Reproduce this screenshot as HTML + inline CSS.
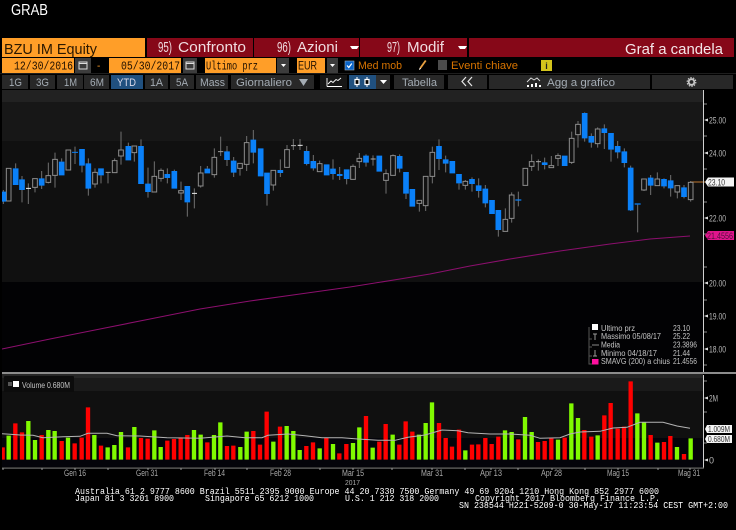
<!DOCTYPE html>
<html><head><meta charset="utf-8"><title>GRAB</title>
<style>
html,body{margin:0;padding:0;background:#000;width:736px;height:530px;overflow:hidden}
svg{display:block}
text{font-family:"Liberation Sans",sans-serif;white-space:pre}
.m{font-family:"Liberation Mono",monospace}
.b{fill:#a4acb4;font-size:11px}
.o{fill:#d87400;font-size:11px}
.a{fill:#b8b8b8;font-size:9px}
.l{fill:#c4c4c4;font-size:8px}
.f{fill:#fff;font-size:9.5px;font-family:"Liberation Mono",monospace}
.w{fill:#f0dce0;font-size:15px}
.x{fill:#a8a8a8;font-size:9px}
</style></head><body>
<svg width="736" height="530" viewBox="0 0 736 530" xmlns="http://www.w3.org/2000/svg">
<rect width="736" height="530" fill="#000"/>
<text x="11" y="15" fill="#fff" font-size="15.5" textLength="37" lengthAdjust="spacingAndGlyphs">GRAB</text>

<!-- row 1 -->
<rect x="2" y="38" width="143" height="19" fill="#ff9e28"/>
<text x="4" y="54" fill="#2a1800" font-size="14.5" textLength="93" lengthAdjust="spacingAndGlyphs">BZU IM Equity</text>
<rect x="147" y="38" width="106" height="19" fill="#860818"/>
<rect x="254" y="38" width="105" height="19" fill="#860818"/>
<rect x="360" y="38" width="107" height="19" fill="#860818"/>
<rect x="469" y="38" width="265" height="19" fill="#860818"/>
<text class="w" x="158" y="52" textLength="14" lengthAdjust="spacingAndGlyphs">95)</text>
<text class="w" x="178" y="52" textLength="68" lengthAdjust="spacingAndGlyphs">Confronto</text>
<text class="w" x="277" y="52" textLength="14" lengthAdjust="spacingAndGlyphs">96)</text>
<text class="w" x="297" y="52" textLength="41" lengthAdjust="spacingAndGlyphs">Azioni</text>
<text class="w" x="387" y="52" textLength="13" lengthAdjust="spacingAndGlyphs">97)</text>
<text class="w" x="407" y="52" textLength="37" lengthAdjust="spacingAndGlyphs">Modif</text>
<text x="625" y="54" fill="#f4e6e8" font-size="14.5" textLength="98" lengthAdjust="spacingAndGlyphs">Graf a candela</text>
<path d="M350 46h9l-2 3h-5zM458 46h9l-2 3h-5z" fill="#fff"/>

<!-- row 2 -->
<rect x="2" y="58" width="72" height="15" fill="#ff9e28"/>
<text class="m" x="14" y="69.500" fill="#201000" font-size="11.500" textLength="59" lengthAdjust="spacingAndGlyphs">12/30/2016</text>
<rect x="75" y="58" width="16" height="15" fill="#3c3c3c"/>
<path d="M79 62h8v7h-8zM79 63.500h8" fill="none" stroke="#ddd"/>
<text x="97" y="69" fill="#ff9e28" font-size="10">-</text>
<rect x="109" y="58" width="72" height="15" fill="#ff9e28"/>
<text class="m" x="121" y="69.500" fill="#201000" font-size="11.500" textLength="59" lengthAdjust="spacingAndGlyphs">05/30/2017</text>
<rect x="183" y="58" width="14" height="15" fill="#3c3c3c"/>
<path d="M186 62h8v7h-8zM186 63.500h8" fill="none" stroke="#ddd"/>
<rect x="205" y="58" width="71" height="15" fill="#ff9e28"/>
<text class="m" x="206" y="69.500" fill="#201000" font-size="11.500" textLength="52" lengthAdjust="spacingAndGlyphs">Ultimo prz</text>
<rect x="277" y="58" width="12" height="15" fill="#3c3c3c"/>
<path d="M281 64h5l-2.500 3z" fill="#fff"/>
<rect x="297" y="58" width="28" height="15" fill="#ff9e28"/>
<text x="298" y="69.500" fill="#201000" font-size="11.500" textLength="19" lengthAdjust="spacingAndGlyphs">EUR</text>
<rect x="327" y="58" width="11" height="15" fill="#3c3c3c"/>
<path d="M330 64h5l-2.500 3z" fill="#fff"/>
<rect x="345" y="61" width="9" height="9" fill="#0a64c8" stroke="#9ab" stroke-width=".6"/>
<path d="M347 65.500l1.800 2 3-4" fill="none" stroke="#fff" stroke-width="1.200"/>
<text class="o" x="358" y="69" textLength="44" lengthAdjust="spacingAndGlyphs">Med mob</text>
<path d="M419 70l1-3 5-7 1.500 1-5 7z" fill="#e8a040"/><path d="M419 70l.7-2.300 1.400 1z" fill="#fff"/>
<rect x="438" y="60" width="9" height="10" fill="#4c4c4c"/>
<text class="o" x="451" y="69" textLength="67" lengthAdjust="spacingAndGlyphs">Eventi chiave</text>
<rect x="541" y="60" width="11" height="11" fill="#d4c41c"/>
<text x="546.500" y="69" fill="#222" font-size="9" font-weight="bold" text-anchor="middle">i</text>
<rect x="0" y="73" width="736" height="1" fill="#1e1e1e"/>

<!-- row 3 -->
<g fill="#282828">
<rect x="2" y="75" width="26" height="14"/><rect x="30" y="75" width="25" height="14"/><rect x="57" y="75" width="26" height="14"/><rect x="84" y="75" width="25" height="14"/>
<rect x="145" y="75" width="23" height="14"/><rect x="170" y="75" width="24" height="14"/><rect x="196" y="75" width="32" height="14"/><rect x="231" y="75" width="83" height="14"/>
<rect x="320" y="75" width="27" height="14" fill="#161616"/><rect x="376" y="75" width="14" height="14" fill="#2e2e2e"/>
<rect x="394" y="75" width="50" height="14"/><rect x="448" y="75" width="39" height="14"/><rect x="489" y="75" width="161" height="14"/><rect x="652" y="75" width="81" height="14"/>
</g>
<rect x="111" y="75" width="32" height="14" fill="#20507f"/>
<rect x="349" y="75" width="27" height="14" fill="#20507f"/>
<text class="b" x="9" y="86" textLength="13" lengthAdjust="spacingAndGlyphs">1G</text>
<text class="b" x="36" y="86" textLength="13" lengthAdjust="spacingAndGlyphs">3G</text>
<text class="b" x="64" y="86" textLength="13" lengthAdjust="spacingAndGlyphs">1M</text>
<text class="b" x="90" y="86" textLength="14" lengthAdjust="spacingAndGlyphs">6M</text>
<text class="b" x="117" y="86" textLength="19" lengthAdjust="spacingAndGlyphs" style="fill:#dde">YTD</text>
<text class="b" x="150" y="86" textLength="13" lengthAdjust="spacingAndGlyphs">1A</text>
<text class="b" x="176" y="86" textLength="12" lengthAdjust="spacingAndGlyphs">5A</text>
<text class="b" x="200" y="86" textLength="25" lengthAdjust="spacingAndGlyphs">Mass</text>
<text class="b" x="236" y="86" textLength="56" lengthAdjust="spacingAndGlyphs">Giornaliero</text>
<path d="M299 79h9l-4.500 7z" fill="#a4acb4"/>
<path d="M327 86.500V78M327 86.500h15M328 84l3-3 2 1.500 3-3 2 1 3-2.500" fill="none" stroke="#fff" stroke-width=".9"/>
<path d="M357 77v10M367 77v10" stroke="#fff"/>
<path d="M355 79.500h4v5h-4zM365 79.500h4v5h-4z" fill="#000" stroke="#fff" stroke-width="1.200"/>
<path d="M380 80h7l-3.500 4z" fill="#fff"/>
<text class="b" x="402" y="86" textLength="35" lengthAdjust="spacingAndGlyphs">Tabella</text>
<path d="M466 77l-4 4.500 4 4.500M472 77l-4 4.500 4 4.500" fill="none" stroke="#e6e6e6" stroke-width="1.200"/>
<path d="M527 87v-2h2v2zM531 87v-3h2v3zM535 87v-4h2v4zM539 87v-2h2v2z" fill="#fff"/>
<path d="M527 82l4-4 3 2 3-2 3 3" fill="none" stroke="#ddd" stroke-width=".9"/>
<text class="b" x="547" y="86" textLength="68" lengthAdjust="spacingAndGlyphs">Agg a grafico</text>
<circle cx="691.500" cy="82" r="2.800" fill="none" stroke="#c8c8c8" stroke-width="1.800"/>
<circle cx="691.500" cy="82" r="4.300" fill="none" stroke="#c8c8c8" stroke-width="1.200" stroke-dasharray="1.500 1.200"/>

<!-- main chart background -->
<rect x="2" y="90" width="701" height="12" fill="#222"/>
<rect x="2" y="102" width="701" height="39" fill="#171717"/>
<rect x="2" y="141" width="701" height="141" fill="#101010"/>
<rect x="2" y="282" width="701" height="90" fill="#020204"/>

<!-- SMA -->
<path d="M2 349L50 339L100 329L150 319L200 309L250 301L300 294L350 287L400 279L430 274L470 266L510 259L560 251L610 244L650 239L690 236" fill="none" stroke="#8c0f6e" stroke-width="1.100"/>
<path d="M690 182h15" stroke="#c07830" stroke-width="1"/>

<!-- candles -->
<g transform="scale(.33333) translate(0,285)">
<path fill="none" stroke="#707070" stroke-width="3" d="M10 285V327M47 205V220M66 243V322M85 265V327M105 251V292M125 228V282M145 203V265M165 173V278M185 190V200M225 155V207M246 212V232M265 190V302M285 220V278M303 241V265M324 232V265M344 190V197M363 110V209M385 143V153M403 173V200M423 133V153M444 218V308M463 199V244M483 220V260M502 220V265M523 224V228M543 260V315M562 322V365M583 280V340M602 213V278M622 213V221M643 160V248M662 125V183M681 153V213M701 186V246"/>
<path fill="#121212" stroke="#8c8c8c" stroke-width="3" d="M19 220h14V318h-14zM98 251h14V277h-14zM138 242h14V262h-14zM158 193h14V241h-14zM198 165h14V225h-14zM278 232h14V267h-14zM337 197h14V233h-14zM356 165h14V183h-14zM396 153h14V173h-14zM456 244h14V291h-14zM476 226h14V250h-14zM536 287h14V294h-14zM595 234h14V273h-14zM636 187h14V239h-14z"/>
<path fill="none" stroke="#0a80f8" stroke-width="17" d="M10 290V320M47 220V270M66 253V285M125 250V272M185 200V241M246 162V212M265 205V281M303 220V241M385 153V196M423 153V267M444 266V291M502 237V249M523 228V281M562 273V322M622 221V235M681 169V195M701 197V233"/>
<path fill="none" stroke="#eee" stroke-width="3" d="M78 280h15M576 295h15"/>
<path fill="none" stroke="#0a80f8" stroke-width="3" d="M216 172h18"/>
<path fill="none" stroke="#999" stroke-width="3" d="M317 232h15M654 170h16"/>
</g>
<g transform="translate(240,0) scale(.33333) translate(0,285)">
<path fill="none" stroke="#707070" stroke-width="3" d="M0 205V242M20 123V228M40 105V205M81 297V332M100 270V287M121 193V246M141 150V164M160 132V165M180 132V165M200 153V211M220 180V227M239 197V206M279 193V254M299 216V255M320 252V268M339 208V214M358 174V219M378 178V215M399 181V212M438 223V296M459 178V182M479 178V232M498 296V312M538 325V350M557 332V348M577 155V265M597 133V225M617 182V232M657 265V284M676 255V284M696 247V290M716 250V308"/>
<path fill="#121212" stroke="#8c8c8c" stroke-width="3" d="M-7 205h14V220h-14zM13 143h14V208h-14zM93 226h14V270h-14zM134 164h14V217h-14zM232 206h14V230h-14zM332 214h14V253h-14zM351 190h14V200h-14zM431 236h14V256h-14zM452 182h14V241h-14zM531 316h14V325h-14zM550 244h14V332h-14zM570 172h14V244h-14zM669 259h14V271h-14z"/>
<path fill="none" stroke="#0a80f8" stroke-width="17" d="M40 134V173M62 160V244M81 233V297M121 225V234M200 168V207M220 198V220M260 208V241M279 221V237M299 237V243M320 223V252M378 182V203M418 182V230M479 183V221M498 231V296M517 282V335M597 153V192M617 193V206M637 198V235M657 237V265M696 252V267M716 271V288"/>
<path fill="none" stroke="#aaa" stroke-width="3" d="M153 152h15M392 192h15"/>
<path fill="none" stroke="#eee" stroke-width="3" d="M173 151h15"/>
</g>
<g transform="translate(480,0) scale(.33333) translate(0,285)">
<path fill="none" stroke="#707070" stroke-width="3" d="M16 270V337M55 405V425M76 340V373M95 292V383M115 290V334M155 178V228M175 193V227M194 188V223M214 183V212M234 175V213M275 110V207M294 78V158M314 52V140M334 115V158M353 97V158M373 88V162M393 164V200M413 138V190M433 160V217M452 212V348M473 329V412M492 251V288M512 240V300M532 232V272M552 250V280M572 240V305M592 271V310M612 270V310M632 258V320"/>
<path fill="#121212" stroke="#8c8c8c" stroke-width="3" d="M69 373h14V409h-14zM88 300h14V370h-14zM129 220h14V271h-14zM148 200h14V214h-14zM207 212h14V218h-14zM227 182h14V190h-14zM268 130h14V202h-14zM287 88h14V119h-14zM346 102h14V146h-14zM485 252h14V285h-14zM525 252h14V272h-14zM585 272h14V291h-14zM625 262h14V314h-14z"/>
<path fill="none" stroke="#0a80f8" stroke-width="17" d="M16 281V325M36 315V357M55 345V405M194 202V210M254 182V213M314 54V130M334 123V143M373 100V114M393 114V164M413 153V172M433 169V204M452 218V346M512 248V272M552 252V274M572 256V280M612 277V306"/>
<path fill="none" stroke="#0a80f8" stroke-width="4" d="M106 315h18M464 327h18"/>
<path fill="none" stroke="#aaa" stroke-width="3" d="M168 200h15"/>
</g>

<!-- main axis -->
<path d="M703.500 90V373" stroke="#d0d0d0"/>
<path d="M704 104h3M704 136h3M704 169h3M704 202h3M704 234h3M704 267h3M704 300h3M704 332h3M704 365h3" stroke="#888"/>
<path d="M704 120l4-1.500v3zM704 153l4-1.500v3zM704 218l4-1.500v3zM704 283l4-1.500v3zM704 316l4-1.500v3zM704 349l4-1.500v3z" fill="#ddd"/>
<text class="a" x="709" y="123.500" textLength="17" lengthAdjust="spacingAndGlyphs">25.00</text>
<text class="a" x="709" y="156.500" textLength="17" lengthAdjust="spacingAndGlyphs">24.00</text>
<text class="a" x="709" y="221.500" textLength="17" lengthAdjust="spacingAndGlyphs">22.00</text>
<text class="a" x="709" y="286.500" textLength="17" lengthAdjust="spacingAndGlyphs">20.00</text>
<text class="a" x="709" y="319.500" textLength="17" lengthAdjust="spacingAndGlyphs">19.00</text>
<text class="a" x="709" y="352.500" textLength="17" lengthAdjust="spacingAndGlyphs">18.00</text>
<path d="M705 182l3-4.500h26v9h-26z" fill="#f4f4f4"/>
<text x="708" y="185.500" fill="#333" font-size="9" textLength="17" lengthAdjust="spacingAndGlyphs">23.10</text>
<path d="M705 235.500l3-4.500h26v9h-26z" fill="#e0148c"/>
<text x="707" y="239" fill="#50103c" font-size="9" textLength="26" lengthAdjust="spacingAndGlyphs">21.4556</text>

<!-- legend -->
<path d="M589 327v37h3M589 339h3M589 347h3M589 356h3" fill="none" stroke="#555"/>
<rect x="592" y="324" width="6" height="6" fill="#fff"/>
<path d="M593 334h4M595 334v6" stroke="#999" fill="none"/>
<path d="M592 345h7" stroke="#888"/>
<path d="M595 350v6M593 356h4" stroke="#999" fill="none"/>
<rect x="592" y="359" width="6.500" height="5.500" fill="#ff10a0"/>
<text class="l" x="601" y="331" textLength="34" lengthAdjust="spacingAndGlyphs">Ultimo prz</text>
<text class="l" x="601" y="339" textLength="60" lengthAdjust="spacingAndGlyphs">Massimo 05/08/17</text>
<text class="l" x="601" y="347.500" textLength="19" lengthAdjust="spacingAndGlyphs">Media</text>
<text class="l" x="601" y="356" textLength="56" lengthAdjust="spacingAndGlyphs">Minimo 04/18/17</text>
<text class="l" x="601" y="364" textLength="69" lengthAdjust="spacingAndGlyphs">SMAVG (200) a chius</text>
<text class="l" x="673" y="331" textLength="17" lengthAdjust="spacingAndGlyphs">23.10</text>
<text class="l" x="673" y="339" textLength="17" lengthAdjust="spacingAndGlyphs">25.22</text>
<text class="l" x="673" y="347.500" textLength="24" lengthAdjust="spacingAndGlyphs">23.3896</text>
<text class="l" x="673" y="356" textLength="17" lengthAdjust="spacingAndGlyphs">21.44</text>
<text class="l" x="673" y="364" textLength="24" lengthAdjust="spacingAndGlyphs">21.4556</text>

<!-- separator -->
<rect x="2" y="372" width="734" height="2" fill="#8c8c8c"/>

<!-- volume panel -->
<rect x="2" y="374" width="701" height="4" fill="#262626"/>
<rect x="2" y="378" width="701" height="13" fill="#1a1a1a"/>
<rect x="2" y="391" width="701" height="47" fill="#101010"/>
<rect x="2" y="438" width="701" height="29" fill="#04040a"/>
<rect x="4" y="376" width="70" height="16" rx="1" fill="#0c0c0c"/>
<rect x="8" y="382" width="4" height="4" fill="#555"/>
<rect x="13" y="381" width="6" height="6" fill="#fff"/>
<text class="l" x="22" y="388" textLength="48" lengthAdjust="spacingAndGlyphs">Volume 0.680M</text>

<g transform="translate(0,370) scale(.33333)">
<path fill="none" stroke="#f00" stroke-width="13" d="M8 269V232M46 269V160M66 269V187M125 269V195M185 269V213M224 269V220M245 269V203M264 269V112M303 269V227M384 269V232M423 269V204M443 269V206M502 269V212M522 269V207M542 269V202M562 269V195M622 269V217M681 269V228M700 269V227"/>
<path fill="none" stroke="#80fa00" stroke-width="13" d="M26 269V197M85 269V153M105 269V210M145 269V180M164 269V183M204 269V203M283 269V195M323 269V232M343 269V225M363 269V186M403 269V171M463 269V181M482 269V231M582 269V180M602 269V194M642 269V195M661 269V157M721 269V231"/>
</g>
<g transform="translate(245,370) scale(.33333)">
<path fill="none" stroke="#f00" stroke-width="13" d="M25 269V183M45 269V224M65 269V125M105 269V170M184 269V228M204 269V217M244 269V204M283 269V250M304 269V222M363 269V138M403 269V215M422 269V162M463 269V224M482 269V154M502 269V185M582 269V159M602 269V204M621 269V230M642 269V179M681 269V224M700 269V223M721 269V204"/>
<path fill="none" stroke="#80fa00" stroke-width="13" d="M5 269V185M85 269V215M125 269V168M145 269V183M164 269V240M224 269V235M264 269V222M324 269V219M343 269V172M383 269V233M443 269V194M522 269V194M542 269V159M561 269V97M661 269V241"/>
</g>
<g transform="translate(490,370) scale(.33333)">
<path fill="none" stroke="#f00" stroke-width="13" d="M5 269V222M25 269V200M85 269V208M144 269V216M164 269V213M184 269V205M224 269V203M283 269V180M304 269V200M343 269V136M362 269V99M383 269V176M402 269V170M422 269V34M482 269V195M522 269V216M541 269V198M582 269V252"/>
<path fill="none" stroke="#80fa00" stroke-width="13" d="M45 269V181M65 269V186M105 269V141M125 269V186M204 269V209M244 269V100M264 269V144M323 269V196M442 269V130M462 269V157M502 269V218M561 269V231M602 269V205"/>
</g>
<!-- volume average -->
<path fill="none" stroke="#b4b4b4" stroke-width="1" d="M2 433.700L10 434.300L20 435L33 435.300L43 437.700L63 436.700L80 436.300L88 433.300L107 433.300L117 435.700L140 436L167 437.700L200 438.300L227 436L245 437.700L262 437.700L268 435.300L288 434L305 435.700L322 437.700L342 437.700L358 439L378 440.300L395 440.300L408 437.300L425 435L442 430L458 430.700L468 432.700L490 434L510 434L530 435.300L540 438.300L560 437.700L570 434L580 432L600 431.300L613 428L627 427.300L640 422.300L663 422.300L677 426L690 428.300"/>

<!-- volume axis -->
<path d="M703.500 375V468" stroke="#d0d0d0"/>
<path d="M704 381h3M704 412h3M704 443h3" stroke="#888"/>
<path d="M704 398l4-1.500v3zM704 460l4-1.500v3z" fill="#ddd"/>
<text class="a" x="709" y="401.500" textLength="9" lengthAdjust="spacingAndGlyphs">2M</text>
<text class="a" x="709" y="463.500">0</text>
<path d="M705 429l2-4h25v8h-25z" fill="#f4f4f4"/>
<text x="708" y="432" fill="#333" font-size="8.500" textLength="22" lengthAdjust="spacingAndGlyphs">1.009M</text>
<path d="M705 439l2-4h25v8h-25z" fill="#f4f4f4"/>
<text x="708" y="442" fill="#333" font-size="8.500" textLength="22" lengthAdjust="spacingAndGlyphs">0.680M</text>

<!-- x axis -->
<rect x="2" y="467.500" width="702" height="1.200" fill="#6c6c6c"/>
<path d="M3 468v2M42 468v2M75 468v2M108 468v2M148 468v2M181 468v2M215 468v2M247 468v2M281 468v2M320 468v2M353 468v2M392 468v2M432 468v2M465 468v2M491 468v2M518 468v2M552 468v2M585 468v2M618 468v2M658 468v2M690 468v2" stroke="#999"/>
<text class="x" x="64" y="476" textLength="22" lengthAdjust="spacingAndGlyphs">Gen 16</text>
<text class="x" x="136" y="476" textLength="22" lengthAdjust="spacingAndGlyphs">Gen 31</text>
<text class="x" x="204" y="476" textLength="21" lengthAdjust="spacingAndGlyphs">Feb 14</text>
<text class="x" x="270" y="476" textLength="21" lengthAdjust="spacingAndGlyphs">Feb 28</text>
<text class="x" x="342" y="476" textLength="22" lengthAdjust="spacingAndGlyphs">Mar 15</text>
<text class="x" x="421" y="476" textLength="22" lengthAdjust="spacingAndGlyphs">Mar 31</text>
<text class="x" x="480" y="476" textLength="22" lengthAdjust="spacingAndGlyphs">Apr 13</text>
<text class="x" x="541" y="476" textLength="21" lengthAdjust="spacingAndGlyphs">Apr 28</text>
<text class="x" x="607" y="476" textLength="22" lengthAdjust="spacingAndGlyphs">Mag 15</text>
<text class="x" x="678" y="476" textLength="22" lengthAdjust="spacingAndGlyphs">Mag 31</text>
<text x="345" y="485" fill="#a8a8a8" font-size="7.500" textLength="15" lengthAdjust="spacingAndGlyphs">2017</text>

<!-- footer -->
<text class="f" x="75" y="494" textLength="584" lengthAdjust="spacingAndGlyphs">Australia 61 2 9777 8600 Brazil 5511 2395 9000 Europe 44 20 7330 7500 Germany 49 69 9204 1210 Hong Kong 852 2977 6000</text>
<text class="f" x="75" y="501" textLength="99" lengthAdjust="spacingAndGlyphs">Japan 81 3 3201 8900</text>
<text class="f" x="205" y="501" textLength="109" lengthAdjust="spacingAndGlyphs">Singapore 65 6212 1000</text>
<text class="f" x="345" y="501" textLength="94" lengthAdjust="spacingAndGlyphs">U.S. 1 212 318 2000</text>
<text class="f" x="475" y="501" textLength="185" lengthAdjust="spacingAndGlyphs">Copyright 2017 Bloomberg Finance L.P.</text>
<text class="f" x="459" y="508" textLength="269" lengthAdjust="spacingAndGlyphs">SN 238544 H221-5209-0 30-May-17 11:23:54 CEST GMT+2:00</text>

<rect x="0" y="90" width="2" height="380" fill="#000"/>
</svg>
</body></html>
